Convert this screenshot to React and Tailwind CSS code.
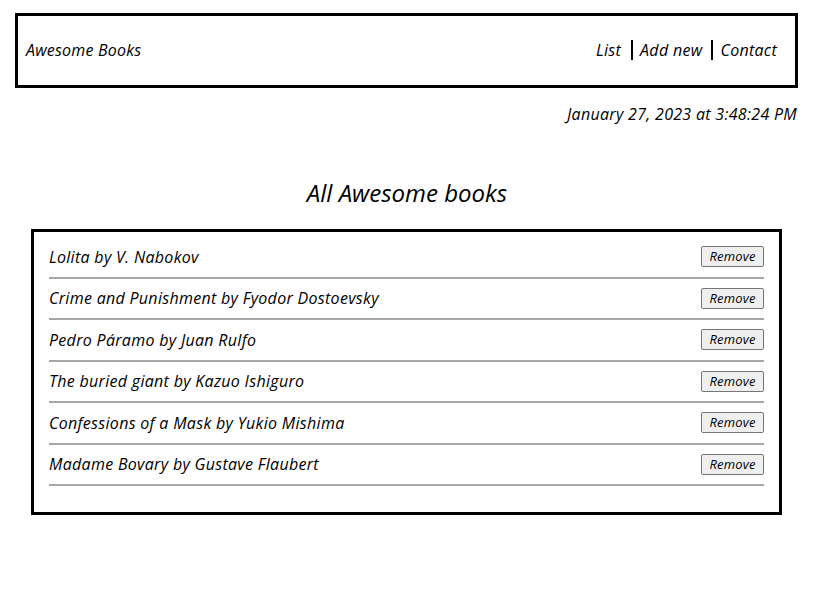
import React from 'react';

const books = [
  { title: 'Lolita', author: 'V. Nabokov' },
  { title: 'Crime and Punishment', author: 'Fyodor Dostoevsky' },
  { title: 'Pedro Páramo', author: 'Juan Rulfo' },
  { title: 'The buried giant', author: 'Kazuo Ishiguro' },
  { title: 'Confessions of a Mask', author: 'Yukio Mishima' },
  { title: 'Madame Bovary', author: 'Gustave Flaubert' },
];

const font = { fontFamily: '"Open Sans", sans-serif' };

const App = () => {
  return (
    <div className="min-h-[602px] bg-white text-black italic" style={font}>
      {/* Header */}
      <div className="pt-[13px] pr-[16px] pl-[15px]">
        <nav className="h-[75px] border-[3px] border-black flex items-center justify-between pl-[8px] pr-[18px] pb-[2px]">
          <span className="text-[16px] tracking-[0.2px]">Awesome Books</span>
          <ul className="flex items-center text-[16px] tracking-[0.3px]">
            <li className="pr-[10px]">List</li>
            <li className="border-l-2 border-black pl-[7px] pr-[9px] leading-[20px]">Add new</li>
            <li className="border-l-2 border-black pl-[7px] leading-[20px]">Contact</li>
          </ul>
        </nav>
      </div>

      {/* Date */}
      <div className="pr-[17px] mt-[14px] text-right text-[16px] tracking-[0.3px] leading-[24px]">
        January 27, 2023 at 3:48:24 PM
      </div>

      {/* Heading */}
      <h1 className="mt-[52px] text-center text-[24px] leading-[30px]">All Awesome books</h1>

      {/* List */}
      <div className="mt-[21px] ml-[31px] w-[751px] border-[3px] border-black px-[15px] pt-[5px] pb-[26px]">
        {books.map((b) => (
          <div key={b.title} className="h-[41.5px] flex items-center justify-between border-b-2 border-[#a8a8a8]">
            <span className="text-[16px] tracking-[0.3px]">{b.title} by {b.author}</span>
            <button className="h-[21px] w-[63px] text-[13px] tracking-[0.2px] bg-[#efefef] border border-[#767676] rounded-[2px] italic">
              Remove
            </button>
          </div>
        ))}
      </div>
    </div>
  );
};

export default App;
